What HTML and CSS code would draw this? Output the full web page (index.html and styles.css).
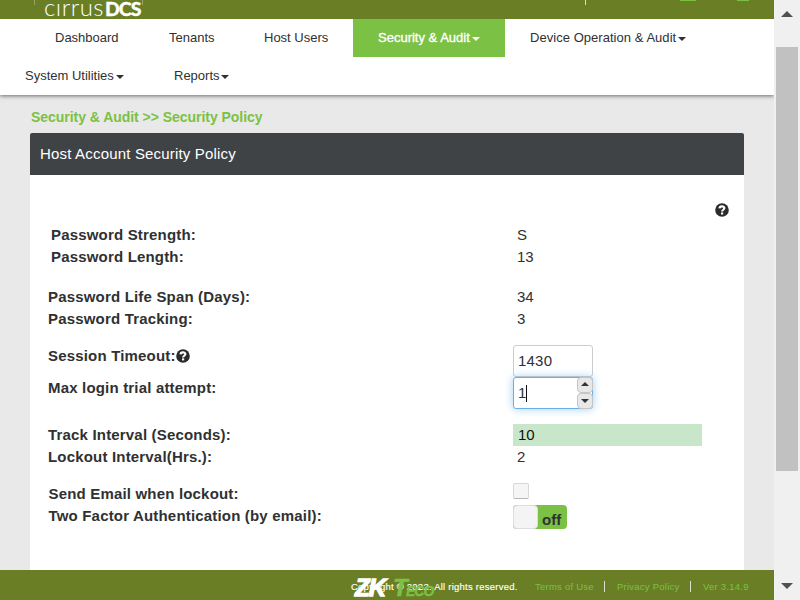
FILE: index.html
```html
<!DOCTYPE html>
<html lang="en">
<head>
<meta charset="utf-8">
<title>Security Policy</title>
<link rel="stylesheet" href="styles.css">
</head>
<body>
<div class="window">
  <div class="page">
    <header class="topbar">
      <i class="swoosh"></i>
      <div class="brand"><span class="brand-thin">cırrus</span><span class="brand-bold">DCS</span></div>
      <i class="top-sep"></i><i class="top-icon"></i><i class="top-icon top-icon-small"></i>
    </header>
    <nav class="nav">
      <a class="item dashboard">Dashboard</a>
      <a class="item tenants">Tenants</a>
      <a class="item users">Host Users</a>
      <a class="item active"><span>Security &amp; Audit</span><i class="caret"></i></a>
      <a class="item device"><span>Device Operation &amp; Audit</span><i class="caret"></i></a>
      <a class="item utilities"><span>System Utilities</span><i class="caret"></i></a>
      <a class="item reports"><span>Reports</span><i class="caret"></i></a>
    </nav>
    <main class="content">
      <div class="crumbs"><span>Security &amp; Audit &gt;&gt; Security Policy</span></div>
      <section class="panel">
        <h1 class="panel-title"><span>Host Account Security Policy</span></h1>
        <div class="help-row">
          <svg class="help" viewBox="0 0 14 14"><circle cx="7" cy="7" r="6.8" fill="#2b2b2b"/><path d="M4.5 5.4C4.6 2.7 9.4 2.7 9.4 5.1 9.4 6.8 7.1 6.7 7.1 8.5" fill="none" stroke="#fff" stroke-width="2.1"/><path d="M6 9.4h2.2v2H6z" fill="#fff"/></svg>
        </div>
        <div class="group first">
          <div class="row"><b>Password Strength:</b><span class="value">S</span></div>
          <div class="row"><b>Password Length:</b><span class="value">13</span></div>
        </div>
        <div class="group second">
          <div class="row"><b>Password Life Span (Days):</b><span class="value">34</span></div>
          <div class="row"><b>Password Tracking:</b><span class="value">3</span></div>
        </div>
        <div class="group third">
          <div class="row tall"><b>Session Timeout:</b><svg class="help inline" viewBox="0 0 14 14"><circle cx="7" cy="7" r="6.8" fill="#2b2b2b"/><path d="M4.5 5.4C4.6 2.7 9.4 2.7 9.4 5.1 9.4 6.8 7.1 6.7 7.1 8.5" fill="none" stroke="#fff" stroke-width="2.1"/><path d="M6 9.4h2.2v2H6z" fill="#fff"/></svg><div class="field">1430</div></div>
          <div class="row tall"><b>Max login trial attempt:</b><div class="field focus"><span>1</span><i class="cursor"></i><div class="spin"><i class="btn up"></i><i class="btn down"></i></div></div></div>
        </div>
        <div class="group fourth">
          <div class="row"><b>Track Interval (Seconds):</b><span class="value marked">10</span></div>
          <div class="row"><b>Lockout Interval(Hrs.):</b><span class="value">2</span></div>
        </div>
        <div class="group fifth">
          <div class="row"><b>Send Email when lockout:</b><i class="check"></i></div>
          <div class="row"><b>Two Factor Authentication (by email):</b><div class="switch"><i class="knob"></i><span>off</span></div></div>
        </div>
      </section>
    </main>
    <footer class="footer">
      <span class="copy">Copyright © 2022. All rights reserved.</span>
      <a class="terms">Terms of Use</a><i class="sep"></i><a class="privacy">Privacy Policy</a><i class="sep"></i><a class="version">Ver 3.14.9</a>
      <div class="logo"><span class="zk">ZK</span><span class="te">T</span><span class="eco">ECO</span></div>
    </footer>
  </div>
  <aside class="scroll"><i class="arrow"></i><i class="thumb"></i><i class="arrow bottom"></i></aside>
</div>
</body>
</html>
```
FILE: styles.css
```css
* { box-sizing: border-box; }
body { margin: 0; overflow: hidden; font-family: "Liberation Sans", Arial, sans-serif; color: #2f3132; }
i { display: block; }
.window { display: flex; width: 800px; height: 600px; }
.page { width: 774px; display: flex; flex-direction: column; background: #e9e9e9; overflow: hidden; }

.topbar { position: relative; z-index: 2; height: 19px; flex: none; background: #6a7e26; overflow: hidden; }
.brand { display: flex; align-items: baseline; margin: -6px 0 0 44px; height: 25px; line-height: 25px; color: #fff; }
.brand-thin { width: 61px; font: 300 24px/25px Lato, sans-serif; letter-spacing: .5px; }
.brand-bold { font: 900 19.5px/25px Lato, sans-serif; letter-spacing: -1px; -webkit-text-stroke: .3px #fff; }
.swoosh { position: absolute; left: 34px; top: 0; width: 109px; height: 5px; border: 1px solid rgba(255,255,255,.3); border-width: 0 1px; }
.top-sep { position: absolute; left: 585px; top: 0; width: 1px; height: 5px; background: #dce0cc; }
.top-icon { position: absolute; left: 680px; top: 0; width: 16px; height: 1px; background: #7bc143; }
.top-icon-small { left: 737px; width: 12px; }

.nav { position: relative; z-index: 1; flex: none; height: 76px; display: flex; flex-wrap: wrap; align-content: flex-start; background: #fff; box-shadow: 0 1px 4px rgba(0,0,0,.55); }
.item { height: 38px; display: flex; align-items: center; padding-left: 25px; font-size: 13px; line-height: 38px; white-space: nowrap; }
.dashboard { width: 114px; margin-left: 30px; }
.tenants { width: 95px; }
.users { width: 114px; }
.active { width: 152px; background: #7bc143; color: #fff; -webkit-text-stroke: .35px #fff; }
.device { width: 210px; }
.device span { letter-spacing: .04px; }
.utilities { width: 149px; }
.reports { width: 110px; }
.caret { margin: 2px 0 0 2px; border: 4px solid transparent; border-top-color: currentColor; border-bottom: 0; }
.reports .caret { margin-left: 1px; }

.content { flex: 1; min-height: 0; padding: 0 30px; display: flex; flex-direction: column; }
.crumbs { height: 38px; padding: 12px 0 0 1px; font-size: 14px; line-height: 20px; font-weight: bold; letter-spacing: -.04px; color: #7bc143; white-space: nowrap; }
.panel { flex: 1; background: #fff; border-radius: 2px 2px 0 0; overflow: hidden; }
.panel-title { margin: 0; height: 42px; padding-left: 10px; background: #3f4346; color: #fff; font-size: 15px; font-weight: normal; line-height: 42px; letter-spacing: .18px; }
.help-row { height: 49px; display: flex; justify-content: flex-end; padding: 28px 15px 0 0; }
.help { width: 14px; height: 14px; flex: none; }

.group { padding-left: 18px; font-size: 15px; }
.first { padding: 0 0 18px 21px; }
.second { padding-bottom: 15px; }
.third { padding-bottom: 15px; }
.fourth { padding-bottom: 15px; }
.fifth { padding-left: 18.5px; }
.row { display: flex; height: 22px; line-height: 22px; white-space: nowrap; }
.row > b { letter-spacing: .18px; }
.value { margin-left: auto; width: 231px; padding-left: 4px; }
.marked { width: 189px; margin-right: 42px; padding-left: 5px; background: #c8e6c9; color: #111; }
.tall { height: 32px; }
.tall .inline { margin: 4px 0 0 0; }
.field { position: relative; display: flex; margin: 0 151px 0 auto; width: 80px; height: 32px; padding-left: 4px; line-height: 30px; border: 1px solid #ccc; border-radius: 3px; background: #fff; letter-spacing: .2px; }
.focus { border-color: #66afe9; box-shadow: 0 0 8px rgba(102,175,233,.6); }
.cursor { width: 1px; height: 17px; margin: 7px 0 0 -1px; background: #111; }
.spin { position: absolute; right: -1px; top: -1px; }
.btn { display: flex; align-items: center; justify-content: center; width: 16px; height: 16px; background: #e8e8e8; border: 1px solid #c5c5c5; border-radius: 4px; }
.btn::before { content: ""; border: 4px solid transparent; border-top: 0; border-bottom-color: #333; }
.up::before { margin-top: -2px; }
.down::before { transform: rotate(180deg); }
.check { width: 16px; height: 16px; margin: 0 215px 0 auto; background: #f5f5f5; border: 1px solid #d8d8d8; border-bottom-color: #b8b8b8; border-radius: 2px; }
.switch { display: flex; margin: 0 177px 0 auto; width: 54px; height: 24px; background: #7bc143; border-radius: 4px; font-weight: bold; line-height: 29px; }
.knob { width: 25px; height: 24px; margin-right: 4px; background: #f4f4f4; border: 1px solid #ddd; border-radius: 4px; }

.footer { position: relative; flex: none; height: 30px; padding: 2px 0 0 351px; display: flex; align-items: center; background: #6a7e26; color: #7bc143; font-size: 9.5px; white-space: nowrap; letter-spacing: .24px; }
.copy { width: 184px; color: #fff; -webkit-text-stroke: .15px #fff; }
.terms { width: 69px; }
.privacy { width: 73px; }
.sep { width: 1px; height: 11px; margin-right: 12px; background: #dce0cc; }
.logo { position: absolute; left: 355px; top: 6px; display: flex; align-items: baseline; height: 24px; line-height: 24px; font-weight: bold; font-style: italic; z-index: 1; color: #7bc143; letter-spacing: 0; }
.zk { width: 38px; font-size: 24px; letter-spacing: -.8px; color: #fff; -webkit-text-stroke: 1.3px #fff; }
.te { width: 13px; font-size: 24px; -webkit-text-stroke: .6px #7bc143; }
.eco { font-size: 14px; letter-spacing: -1px; -webkit-text-stroke: .3px #7bc143; }

.scroll { width: 26px; background: #f0f0f0; display: flex; flex-direction: column; }
.arrow { flex: none; width: 12px; margin: 11px 0 0 7px; border: 6px solid transparent; border-top: 0; border-bottom-color: #505050; }
.thumb { flex: none; width: 22px; height: 424px; margin: 30px 0 0 2px; background: #c1c1c1; }
.bottom { margin: 112px 0 0 7px; transform: rotate(180deg); }
```
